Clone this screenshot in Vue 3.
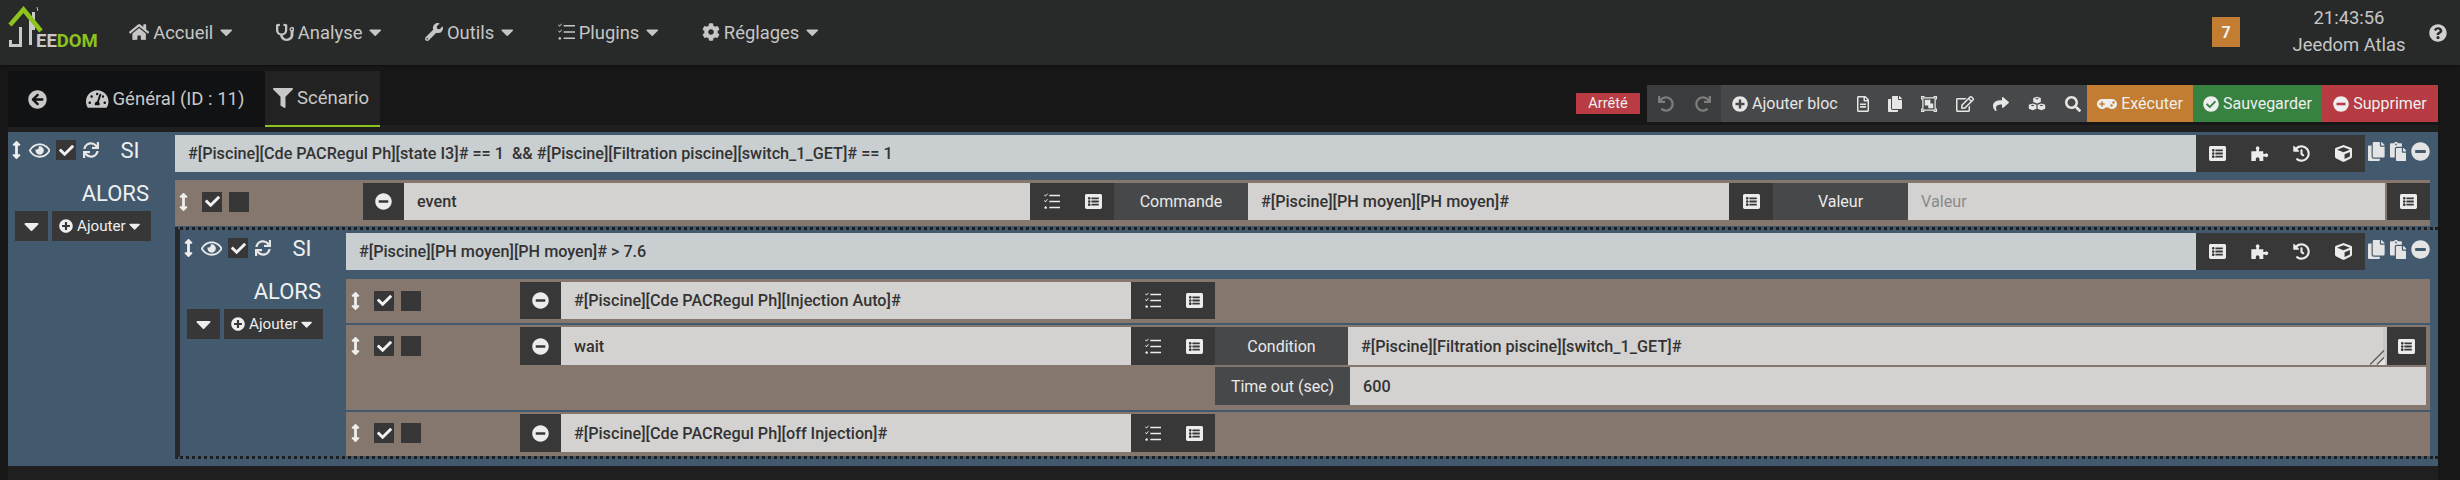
<script setup>
import { h } from 'vue'

const P = {
  check: [512, 'M173.898 439.404l-166.4-166.4c-9.997-9.997-9.997-26.206 0-36.204l36.203-36.204c9.997-9.998 26.207-9.998 36.204 0L192 312.69 432.095 72.596c9.997-9.997 26.207-9.997 36.204 0l36.203 36.204c9.997 9.997 9.997 26.206 0 36.204l-294.4 294.401c-9.998 9.997-26.207 9.997-36.204-.001z'],
  minus: [512, 'M256 8C119 8 8 119 8 256s111 248 248 248 248-111 248-248S393 8 256 8zM124 296c-6.6 0-12-5.4-12-12v-56c0-6.6 5.4-12 12-12h264c6.6 0 12 5.4 12 12v56c0 6.6-5.4 12-12 12H124z'],
  plus: [512, 'M256 8C119 8 8 119 8 256s111 248 248 248 248-111 248-248S393 8 256 8zm144 276c0 6.6-5.4 12-12 12h-92v92c0 6.6-5.4 12-12 12h-56c-6.6 0-12-5.4-12-12v-92h-92c-6.6 0-12-5.4-12-12v-56c0-6.6 5.4-12 12-12h92v-92c0-6.6 5.4-12 12-12h56c6.6 0 12 5.4 12 12v92h92c6.6 0 12 5.4 12 12v56z'],
  ok: [512, 'M504 256c0 136.967-111.033 248-248 248S8 392.967 8 256 119.033 8 256 8s248 111.033 248 248zM227.314 387.314l184-184c6.248-6.248 6.248-16.379 0-22.627l-22.627-22.627c-6.248-6.249-16.379-6.249-22.628 0L216 308.118l-70.059-70.059c-6.248-6.248-16.379-6.248-22.628 0l-22.627 22.627c-6.248 6.248-6.248 16.379 0 22.627l104 104c6.249 6.249 16.379 6.249 22.628.001z'],
  help: [512, 'M504 256c0 136.997-111.043 248-248 248S8 392.997 8 256C8 119.083 119.043 8 256 8s248 111.083 248 248zM262.655 90c-54.497 0-89.255 22.957-116.549 63.758-3.536 5.286-2.353 12.415 2.715 16.258l34.699 26.31c5.205 3.947 12.621 3.008 16.665-2.122 17.864-22.658 30.113-35.797 57.303-35.797 20.429 0 45.698 13.148 45.698 32.958 0 14.976-12.363 22.667-32.534 33.976C247.128 238.528 216 254.941 216 296v4c0 6.627 5.373 12 12 12h56c6.627 0 12-5.373 12-12v-1.333c0-28.462 83.186-29.647 83.186-106.667 0-58.002-60.165-102-116.531-102zM256 338c-25.365 0-46 20.635-46 46 0 25.364 20.635 46 46 46s46-20.636 46-46c0-25.365-20.635-46-46-46z'],
  back: [512, 'M256 504C119 504 8 393 8 256S119 8 256 8s248 111 248 248-111 248-248 248zm28.9-143.6L209.4 288H392c13.3 0 24-10.7 24-24v-16c0-13.3-10.7-24-24-24H209.4l75.5-72.4c9.7-9.3 9.9-24.8.4-34.3l-11-10.9c-9.4-9.4-24.6-9.4-33.9 0L107.7 239c-9.4 9.4-9.4 24.6 0 33.9l132.7 132.7c9.4 9.4 24.6 9.4 33.9 0l11-10.9c9.5-9.5 9.3-25-.4-34.3z'],
  search: [512, 'M505 442.7L405.3 343c-4.5-4.5-10.6-7-17-7H372c27.6-35.3 44-79.7 44-128C416 93.1 322.9 0 208 0S0 93.1 0 208s93.1 208 208 208c48.3 0 92.7-16.4 128-44v16.3c0 6.4 2.5 12.5 7 17l99.7 99.7c9.4 9.4 24.6 9.4 33.9 0l28.3-28.3c9.4-9.4 9.4-24.6.1-34zM208 336c-70.7 0-128-57.2-128-128 0-70.7 57.2-128 128-128 70.7 0 128 57.2 128 128 0 70.7-57.2 128-128 128z'],
  filter: [512, 'M487.976 0H24.028C2.71 0-8.047 25.866 7.058 40.971L192 225.941V432c0 7.831 3.821 15.17 10.237 19.662l80 55.98C298.02 518.69 320 507.493 320 487.98V225.941l184.947-184.97C520.021 25.896 509.338 0 487.976 0z'],
  share: [512, 'M503.691 189.836L327.687 37.851C312.281 24.546 288 35.347 288 56.015v80.053C127.371 137.907 0 170.1 0 322.326c0 61.441 39.581 122.309 83.333 154.132 13.653 9.931 33.111-2.533 28.077-18.631C66.066 312.814 132.917 274.316 288 272.085V360c0 20.7 24.3 31.453 39.687 18.164l176.004-152c11.071-9.562 11.086-26.753 0-36.328z'],
  wrench: [512, 'M507.73 109.1c-2.24-9.03-13.54-12.09-20.12-5.51l-74.36 74.36-67.88-11.31-11.31-67.88 74.36-74.36c6.62-6.62 3.43-17.9-5.66-20.16-47.38-11.74-99.55.91-136.58 37.93-39.64 39.64-50.55 97.1-34.05 147.2L18.74 402.76c-24.99 24.99-24.99 65.51 0 90.5 24.99 24.99 65.51 24.99 90.5 0l213.21-213.21c50.12 16.71 107.47 5.68 147.37-34.22 37.07-37.07 49.7-89.32 37.91-136.73zM64 472c-13.25 0-24-10.75-24-24 0-13.26 10.75-24 24-24s24 10.74 24 24c0 13.25-10.75 24-24 24z'],
  cog: [512, 'M487.4 315.7l-42.6-24.6c4.3-23.2 4.3-47 0-70.2l42.6-24.6c4.9-2.8 7.1-8.6 5.5-14-11.1-35.6-30-67.8-54.7-94.6-3.8-4.1-10-5.1-14.8-2.3L380.8 110c-17.9-15.4-38.5-27.3-60.8-35.1V25.8c0-5.6-3.9-10.5-9.4-11.7-36.7-8.2-74.3-7.8-109.2 0-5.5 1.2-9.4 6.1-9.4 11.7V75c-22.2 7.9-42.8 19.8-60.8 35.1L88.7 85.5c-4.9-2.8-11-1.9-14.8 2.3-24.7 26.7-43.6 58.9-54.7 94.6-1.7 5.4.6 11.2 5.5 14L67.3 221c-4.3 23.2-4.3 47 0 70.2l-42.6 24.6c-4.9 2.8-7.1 8.6-5.5 14 11.1 35.6 30 67.8 54.7 94.6 3.8 4.1 10 5.1 14.8 2.3l42.6-24.6c17.9 15.4 38.5 27.3 60.8 35.1v49.2c0 5.6 3.9 10.5 9.4 11.7 36.7 8.2 74.3 7.8 109.2 0 5.5-1.2 9.4-6.1 9.4-11.7v-49.2c22.2-7.9 42.8-19.8 60.8-35.1l42.6 24.6c4.9 2.8 11 1.9 14.8-2.3 24.7-26.7 43.6-58.9 54.7-94.6 1.5-5.5-.7-11.3-5.6-14.1zM256 336c-44.1 0-80-35.9-80-80s35.9-80 80-80 80 35.9 80 80-35.9 80-80 80z'],
  home: [576, 'M280.37 148.26L96 300.11V464a16 16 0 0 0 16 16l112.06-.29a16 16 0 0 0 15.92-16V368a16 16 0 0 1 16-16h64a16 16 0 0 1 16 16v95.64a16 16 0 0 0 16 16.05L464 480a16 16 0 0 0 16-16V300L295.67 148.26a12.19 12.19 0 0 0-15.3 0zM571.6 251.47L488 182.56V44.05a12 12 0 0 0-12-12h-56a12 12 0 0 0-12 12v72.61L318.47 43a48 48 0 0 0-61 0L4.34 251.47a12 12 0 0 0-1.6 16.9l25.5 31A12 12 0 0 0 45.15 301l235.22-193.74a12.19 12.19 0 0 1 15.3 0L530.9 301a12 12 0 0 0 16.9-1.6l25.5-31a12 12 0 0 0-1.7-16.93z'],
  sync: [512, 'M440.65 12.57l4 82.77A247.16 247.16 0 0 0 255.83 8C134.73 8 33.91 94.92 12.29 209.82A12 12 0 0 0 24.09 224h49.05a12 12 0 0 0 11.67-9.26 175.91 175.91 0 0 1 317-56.94l-101.46-4.86a12 12 0 0 0-12.57 12v47.41a12 12 0 0 0 12 12H500a12 12 0 0 0 12-12V12a12 12 0 0 0-12-12h-47.37a12 12 0 0 0-11.98 12.57zM255.83 432a175.61 175.61 0 0 1-146-77.8l101.8 4.87a12 12 0 0 0 12.57-12v-47.4a12 12 0 0 0-12-12H12a12 12 0 0 0-12 12V500a12 12 0 0 0 12 12h47.35a12 12 0 0 0 12-12.6l-4.15-82.57A247.17 247.17 0 0 0 255.83 504c121.11 0 221.93-86.92 243.55-201.82a12 12 0 0 0-11.8-14.18h-49.05a12 12 0 0 0-11.67 9.26A175.86 175.86 0 0 1 255.83 432z'],
  undo: [512, 'M212.333 224.333H12c-6.627 0-12-5.373-12-12V12C0 5.373 5.373 0 12 0h48c6.627 0 12 5.373 12 12v78.112C117.773 39.279 184.26 7.47 258.175 8.007c136.906.994 246.448 111.623 246.157 248.532C504.041 393.258 393.12 504 256.333 504c-64.089 0-122.496-24.313-166.51-64.215-5.099-4.622-5.334-12.554-.467-17.42l33.967-33.967c4.474-4.474 11.662-4.717 16.401-.525C170.76 415.336 211.58 432 256.333 432c97.268 0 176-78.716 176-176 0-97.267-78.716-176-176-176-58.496 0-110.28 28.476-142.274 72.333h98.274c6.627 0 12 5.373 12 12v48c0 6.627-5.373 12-12 12z'],
  copy: [448, 'M320 448v40c0 13.255-10.745 24-24 24H24c-13.255 0-24-10.745-24-24V120c0-13.255 10.745-24 24-24h72v296c0 30.879 25.121 56 56 56h168zm0-344V0H152c-13.255 0-24 10.745-24 24v368c0 13.255 10.745 24 24 24h272c13.255 0 24-10.745 24-24V128H344c-13.2 0-24-10.8-24-24zm120.971-31.029L375.029 7.029A24 24 0 0 0 358.059 0H352v96h96v-6.059a24 24 0 0 0-7.029-16.97z'],
  paste: [448, 'M128 184c0-30.879 25.122-56 56-56h136V56c0-13.255-10.745-24-24-24h-80.61C204.306 12.89 183.637 0 160 0s-44.306 12.89-55.39 32H24C10.745 32 0 42.745 0 56v336c0 13.255 10.745 24 24 24h104V184zm32-144c13.255 0 24 10.745 24 24s-10.745 24-24 24-24-10.745-24-24 10.745-24 24-24zm184 248h104v200c0 13.255-10.745 24-24 24H184c-13.255 0-24-10.745-24-24V184c0-13.255 10.745-24 24-24h136v104c0 13.2 10.8 24 24 24zm104-38.059V256h-96v-96h6.059a24 24 0 0 1 16.97 7.029l65.941 65.941a24.002 24.002 0 0 1 7.03 16.971z'],
  eye: [576, 'M288 144a110.94 110.94 0 0 0-31.24 5 55.4 55.4 0 0 1 7.24 27 56 56 0 0 1-56 56 55.4 55.4 0 0 1-27-7.24A111.71 111.71 0 1 0 288 144zm284.52 97.4C518.29 135.59 410.93 64 288 64S57.68 135.64 3.48 241.41a32.35 32.35 0 0 0 0 29.19C57.71 376.41 165.07 448 288 448s230.32-71.64 284.52-177.41a32.35 32.35 0 0 0 0-29.19zM288 400c-98.65 0-189.09-55-237.93-144C98.91 167 189.34 112 288 112s189.09 55 237.93 144C477.1 345 386.66 400 288 400z'],
  list: [512, 'M464 480H48c-26.51 0-48-21.49-48-48V80c0-26.51 21.49-48 48-48h416c26.51 0 48 21.49 48 48v352c0 26.51-21.49 48-48 48zM128 120c-22.091 0-40 17.909-40 40s17.909 40 40 40 40-17.909 40-40-17.909-40-40-40zm0 96c-22.091 0-40 17.909-40 40s17.909 40 40 40 40-17.909 40-40-17.909-40-40-40zm0 96c-22.091 0-40 17.909-40 40s17.909 40 40 40 40-17.909 40-40-17.909-40-40-40zm288-136v-32c0-6.627-5.373-12-12-12H204c-6.627 0-12 5.373-12 12v32c0 6.627 5.373 12 12 12h200c6.627 0 12-5.373 12-12zm0 96v-32c0-6.627-5.373-12-12-12H204c-6.627 0-12 5.373-12 12v32c0 6.627 5.373 12 12 12h200c6.627 0 12-5.373 12-12zm0 96v-32c0-6.627-5.373-12-12-12H204c-6.627 0-12 5.373-12 12v32c0 6.627 5.373 12 12 12h200c6.627 0 12-5.373 12-12z'],
  tasks: [512, 'M30 60l14-14 30 28L130 14l15 14-70 78zM30 230l14-14 30 28 56-60 15 14-70 78zM80 400a38 38 0 1 0 .1 0zM190 55h322v46H190zM190 233h322v46H190zM190 411h322v46H190z'],
  steth: [512, 'M447.1 112c-34.2.5-62.3 28.4-63 62.6-.5 24.3 12.5 45.6 32 56.8V344c0 57.3-50.2 104-112 104-60 0-109.2-44-111.9-98.9C268.6 336.9 320 277.3 320 205.8V59.2c0-11.4-8-21.2-19.2-23.5l-62.9-12.6c-13-2.6-25.6 5.8-28.2 18.8l-3.1 15.7c-2.6 13 5.8 25.6 18.8 28.2l30.7 6.1v112.4c0 52.9-42.8 96.2-95.6 96.1-52.7 0-95.5-43.1-95.5-96V93.1l30.6-6.1c13-2.6 21.4-15.2 18.8-28.2l-3.1-15.7c-2.6-13-15.2-21.4-28.2-18.8L19.2 36.9C8 39.1 0 49 0 60.4v146.4c0 71.6 51.6 131.2 119.5 143.4C122.2 439.1 200.4 512 304 512c105.9 0 192-78.9 192-168V231.4c19.1-11.1 32-31.7 32-55.4 0-35.7-29.2-64.5-64.9-64zM448 200a24 24 0 1 1 .1 0z'],
  tacho: [576, 'M288 32C128.94 32 0 160.94 0 320c0 52.8 14.25 102.26 39.06 144.8 5.61 9.62 16.3 15.2 27.44 15.2h443c11.14 0 21.83-5.58 27.44-15.2C561.75 422.26 576 372.8 576 320c0-159.06-128.94-288-288-288zm0 64c14.71 0 26.58 10.13 30.32 23.65-1.11 2.26-2.64 4.23-3.45 6.67l-9.22 27.67c-5.13 3.49-10.97 6.01-17.64 6.01-17.67 0-32-14.33-32-32S270.33 96 288 96zM96 384c-17.67 0-32-14.33-32-32s14.33-32 32-32 32 14.33 32 32-14.33 32-32 32zm48-160c-17.67 0-32-14.33-32-32s14.33-32 32-32 32 14.33 32 32-14.33 32-32 32zm246.77-72.41l-61.33 184C343.13 347.33 352 364.54 352 384c0 11.72-3.38 22.55-8.88 32H232.88c-5.5-9.45-8.88-20.28-8.88-32 0-33.94 26.5-61.43 59.9-63.59l61.34-184.01c4.17-12.56 17.73-19.45 30.36-15.17 12.57 4.19 19.35 17.79 15.17 30.36zm14.66 57.2l15.52-46.55c3.47-1.29 7.13-2.23 11.05-2.23 17.67 0 32 14.33 32 32s-14.33 32-32 32c-11.38 0-20.89-6.28-26.57-15.22zM480 384c-17.67 0-32-14.33-32-32s14.33-32 32-32 32 14.33 32 32-14.33 32-32 32z'],
  gamepad: [640, 'M480.07 96H160a160 160 0 1 0 114.24 272h91.52A160 160 0 1 0 480.07 96zM248 268a12 12 0 0 1-12 12h-52v52a12 12 0 0 1-12 12h-24a12 12 0 0 1-12-12v-52H84a12 12 0 0 1-12-12v-24a12 12 0 0 1 12-12h52v-52a12 12 0 0 1 12-12h24a12 12 0 0 1 12 12v52h52a12 12 0 0 1 12 12zm216 76a40 40 0 1 1 40-40 40 40 0 0 1-40 40zm64-96a40 40 0 1 1 40-40 40 40 0 0 1-40 40z'],
  puzzle: [576, 'M40 190H190V135A55 55 0 1 1 270 135V190H400V270H455A55 55 0 1 1 455 350H400V480H285V425A55 55 0 0 0 175 425V480H40Z'],
  history: [512, 'M504 255.531c.253 136.64-111.18 248.372-247.82 248.468-59.015.042-113.223-20.53-155.822-54.911-11.077-8.94-11.905-25.541-1.839-35.607l11.267-11.267c8.609-8.609 22.353-9.551 31.891-1.984C173.062 425.135 212.781 440 256 440c101.705 0 184-82.311 184-184 0-101.705-82.311-184-184-184-48.814 0-93.149 18.969-126.068 49.932l50.754 50.754c10.08 10.08 2.941 27.314-11.313 27.314H24c-8.837 0-16-7.163-16-16V38.627c0-14.254 17.234-21.393 27.314-11.314l49.372 49.372C129.209 34.136 189.552 8 256 8c136.81 0 247.747 110.78 248 247.531zm-180.912 78.784l9.823-12.63c8.138-10.463 6.253-25.542-4.21-33.679L288 256.349V152c0-13.255-10.745-24-24-24h-16c-13.255 0-24 10.745-24 24v135.651l65.409 50.874c10.463 8.137 25.541 6.253 33.679-4.21z'],
  cube: [512, 'M239.1 6.3l-208 78c-18.7 7-31.1 25-31.1 45v225.1c0 18.2 10.3 34.8 26.5 42.9l208 104c13.5 6.8 29.4 6.8 42.9 0l208-104c16.3-8.1 26.5-24.8 26.5-42.9V129.3c0-20-12.4-37.9-31.1-44.9l-208-78C262 2.2 250 2.2 239.1 6.3zM256 68.4l192 72v1.1l-192 78-192-78v-1.1l192-72zm32 356V275.5l160-65v133.9l-160 80z'],
  cubes: [576, 'M288 20L410 66V190L288 238 166 190V66ZM288 60L222 84 288 110 354 84ZM148 236L270 282V406L148 454 26 406V282ZM148 276L82 300 148 326 214 300ZM428 236L550 282V406L428 454 306 406V282ZM428 276L362 300 428 326 494 300Z'],
  crop: [512, 'M0 0H110V40H402V0H512V110H472V402H512V512H402V472H110V512H0V402H40V110H0ZM40 40V70H70V40ZM442 40V70H472V40ZM40 442V472H70V442ZM442 442V472H472V442ZM80 80V432H432V80ZM120 120H300V240H392V392H232V300H120Z'],
  file: [384, 'M288 248v28c0 6.6-5.4 12-12 12H108c-6.6 0-12-5.4-12-12v-28c0-6.6 5.4-12 12-12h168c6.6 0 12 5.4 12 12zm-12 72H108c-6.6 0-12 5.4-12 12v28c0 6.6 5.4 12 12 12h168c6.6 0 12-5.4 12-12v-28c0-6.6-5.4-12-12-12zm108-188.1V464c0 26.5-21.5 48-48 48H48c-26.5 0-48-21.5-48-48V48C0 21.5 21.5 0 48 0h204.1C264.8 0 277 5.1 286 14.1L369.9 98c9 8.9 14.1 21.2 14.1 33.9zm-128-80V128h76.1L256 51.9zM336 464V176H232c-13.3 0-24-10.7-24-24V48H48v416h288z'],
  edit: [576, 'M402.3 344.9l32-32c5-5 13.7-1.5 13.7 5.7V464c0 26.5-21.5 48-48 48H48c-26.5 0-48-21.5-48-48V112c0-26.5 21.5-48 48-48h273.5c7.1 0 10.7 8.6 5.7 13.7l-32 32c-1.5 1.5-3.5 2.3-5.7 2.3H48v352h352V350.5c0-2.1.8-4.1 2.3-5.6zm156.6-201.8L296.3 405.7l-90.4 10c-26.2 2.9-48.5-19.2-45.6-45.6l10-90.4L432.9 17.1c22.9-22.9 59.9-22.9 82.7 0l43.2 43.2c22.9 22.9 22.9 60 .1 82.8zM460.1 174L402 115.9 216.2 301.8l-7.3 65.3 65.3-7.3L460.1 174zm64.8-79.7l-43.2-43.2c-4.1-4.1-10.8-4.1-14.8 0L436 82l58.1 58.1 30.9-30.9c4-4.2 4-10.8-.1-14.9z'],
  arrows: [256, 'M214.059 377.941H168V134.059h46.059c21.382 0 32.09-25.851 16.971-40.971L144.971 7.029c-9.373-9.373-24.568-9.373-33.941 0L24.971 93.088c-15.119 15.119-4.411 40.971 16.971 40.971H88v243.882H41.941c-21.382 0-32.09 25.851-16.971 40.971l86.059 86.059c9.373 9.373 24.568 9.373 33.941 0l86.059-86.059c15.119-15.119 4.411-40.971-16.971-40.971z'],
  caret: [320, 'M31 192h258c18 0 27 21 14 34L174 355c-8 8-20 8-28 0L17 226c-13-13-4-34 14-34z']
}

// Fixed icon height comes from CSS; the width follows each glyph's own ratio.
const Ic = (props) => {
  const [w, d] = P[props.n]
  return h('svg', { viewBox: `0 0 ${w} 512`, fill: 'currentColor', 'fill-rule': 'evenodd', class: 'ic' }, [h('path', { d })])
}
Ic.props = ['n']

const navItems = [
  { icon: 'home', label: 'Accueil' },
  { icon: 'steth', label: 'Analyse' },
  { icon: 'wrench', label: 'Outils' },
  { icon: 'tasks', label: 'Plugins' },
  { icon: 'cog', label: 'Réglages' }
]
const toolIcons = ['file', 'copy', 'crop', 'edit', 'share', 'cubes', 'search']
const addonIcons = ['list', 'puzzle', 'history', 'cube']
</script>

<template>
  <div class="page">
    <header class="nav">
      <svg class="logo" viewBox="0 0 110 65" width="110" height="65">
        <path d="M29 18h3v27h-3z" fill="#c9c9c9" />
        <path d="M37 7l.8 4" stroke="#bbb" stroke-width="1" fill="none" />
        <path d="M32 12h3v18h-3z" fill="#c9c9c9" />
        <path d="M19 27h3v20H9v-7h3v4h7z" fill="#c9c9c9" />
        <path d="M10 25L23.500 9.500L41 31" fill="none" stroke="#8dc21f" stroke-width="4.500" />
        <text x="36" y="47" class="logo-text">EE<tspan fill="#8dc21f">DOM</tspan></text>
      </svg>
      <div class="menu">
        <div v-for="m in navItems" :key="m.label" class="menu-item">
          <Ic :n="m.icon" class="menu-ic" />
          <span>{{ m.label }}</span>
          <Ic n="caret" class="menu-caret" />
        </div>
      </div>
      <div class="nav-right">
        <div class="badge">7</div>
        <div class="clock">
          <div>21:43:56</div>
          <div>Jeedom Atlas</div>
        </div>
        <Ic n="help" class="help" />
      </div>
    </header>

    <div class="subbar">
      <div class="tabs">
        <div class="tab tab-back"><Ic n="back" class="tab-ic" /></div>
        <div class="tab tab-gen"><Ic n="tacho" class="tab-ic" /><span>Général (ID : 11)</span></div>
        <div class="tab tab-active"><Ic n="filter" class="tab-ic" /><span>Scénario</span></div>
      </div>
      <div class="toolbar">
        <span class="state">Arrêté</span>
        <div class="tool-group undo">
          <Ic n="undo" class="tool-ic" />
          <Ic n="undo" class="tool-ic flip" />
        </div>
        <div class="tool-group main">
          <div class="add-bloc"><Ic n="plus" class="tool-ic" /><span>Ajouter bloc</span></div>
          <div v-for="t in toolIcons" :key="t" class="tool-btn"><Ic :n="t" class="tool-ic" /></div>
        </div>
        <div class="act orange"><Ic n="gamepad" class="tool-ic" /><span>Exécuter</span></div>
        <div class="act green"><Ic n="ok" class="tool-ic" /><span>Sauvegarder</span></div>
        <div class="act red"><Ic n="minus" class="tool-ic" /><span>Supprimer</span></div>
      </div>
    </div>

    <main class="content">
      <section class="block">
        <div class="side">
          <div class="head">
            <Ic n="arrows" class="arrows" />
            <Ic n="eye" class="eye" />
            <span class="box"><Ic n="check" class="tick" /></span>
            <Ic n="sync" class="sync" />
            <span class="si">SI</span>
          </div>
          <div class="alors">ALORS</div>
          <div class="side-btns">
            <div class="sbtn sbtn-down"><Ic n="caret" class="down" /></div>
            <div class="sbtn sbtn-add"><Ic n="plus" class="add-ic" /><span>Ajouter</span><Ic n="caret" class="add-caret" /></div>
          </div>
        </div>
        <div class="body">
          <div class="cond">
            <div class="cond-input">#[Piscine][Cde PACRegul Ph][state I3]# == 1&nbsp; &amp;&amp; #[Piscine][Filtration piscine][switch_1_GET]# == 1</div>
            <div class="addon"><div v-for="a in addonIcons" :key="a" class="ibtn"><Ic :n="a" class="ib-ic" /></div></div>
            <div class="mini"><Ic n="copy" class="mini-ic" /><Ic n="paste" class="mini-ic" /><Ic n="minus" class="mini-ic" /></div>
          </div>

          <div class="action action-first">
            <div class="line">
              <div class="row-left wide">
                <Ic n="arrows" class="arrows" />
                <span class="box"><Ic n="check" class="tick" /></span>
                <span class="box"></span>
              </div>
              <div class="ibtn rm"><Ic n="minus" class="ib-ic" /></div>
              <div class="field name-wide">event</div>
              <div class="grp"><div class="ibtn"><Ic n="tasks" class="ib-ic" /></div><div class="ibtn"><Ic n="list" class="ib-ic" /></div></div>
              <div class="lab w-cmd">Commande</div>
              <div class="field w-cmdv">#[Piscine][PH moyen][PH moyen]#</div>
              <div class="ibtn wide-btn"><Ic n="list" class="ib-ic" /></div>
              <div class="lab w-val">Valeur</div>
              <div class="field flex ph">Valeur</div>
              <div class="ibtn end-btn"><Ic n="list" class="ib-ic" /></div>
            </div>
          </div>

          <section class="block nested">
            <div class="side">
              <div class="head">
                <Ic n="arrows" class="arrows" />
                <Ic n="eye" class="eye" />
                <span class="box"><Ic n="check" class="tick" /></span>
                <Ic n="sync" class="sync" />
                <span class="si">SI</span>
              </div>
              <div class="alors">ALORS</div>
              <div class="side-btns">
                <div class="sbtn sbtn-down"><Ic n="caret" class="down" /></div>
                <div class="sbtn sbtn-add"><Ic n="plus" class="add-ic" /><span>Ajouter</span><Ic n="caret" class="add-caret" /></div>
              </div>
            </div>
            <div class="body">
              <div class="cond">
                <div class="cond-input">#[Piscine][PH moyen][PH moyen]# &gt; 7.6</div>
                <div class="addon"><div v-for="a in addonIcons" :key="a" class="ibtn"><Ic :n="a" class="ib-ic" /></div></div>
                <div class="mini"><Ic n="copy" class="mini-ic" /><Ic n="paste" class="mini-ic" /><Ic n="minus" class="mini-ic" /></div>
              </div>

              <div class="action a1">
                <div class="line">
                  <div class="row-left">
                    <Ic n="arrows" class="arrows" />
                    <span class="box"><Ic n="check" class="tick" /></span>
                    <span class="box"></span>
                  </div>
                  <div class="ibtn rm"><Ic n="minus" class="ib-ic" /></div>
                  <div class="field name">#[Piscine][Cde PACRegul Ph][Injection Auto]#</div>
                  <div class="grp"><div class="ibtn"><Ic n="tasks" class="ib-ic" /></div><div class="ibtn"><Ic n="list" class="ib-ic" /></div></div>
                </div>
              </div>

              <div class="action a2">
                <div class="line tall">
                  <div class="row-left">
                    <Ic n="arrows" class="arrows" />
                    <span class="box"><Ic n="check" class="tick" /></span>
                    <span class="box"></span>
                  </div>
                  <div class="ibtn rm"><Ic n="minus" class="ib-ic" /></div>
                  <div class="field name">wait</div>
                  <div class="grp"><div class="ibtn"><Ic n="tasks" class="ib-ic" /></div><div class="ibtn"><Ic n="list" class="ib-ic" /></div></div>
                  <div class="lab w-cond">Condition</div>
                  <div class="field flex grip">
                    <span>#[Piscine][Filtration piscine][switch_1_GET]#</span>
                    <svg class="grip-mark" viewBox="0 0 15 15" width="15" height="15">
                      <path d="M7 15l8-8v8z" fill="#e6e5e3" />
                      <path d="M0 14.500L14 .5M7 14.500L14 7.500" stroke="#555" stroke-width="1.200" fill="none" />
                    </svg>
                  </div>
                  <div class="ibtn end-small"><Ic n="list" class="ib-ic" /></div>
                </div>
                <div class="line second">
                  <div class="lab w-time">Time out (sec)</div>
                  <div class="field flex">600</div>
                </div>
              </div>

              <div class="action a3">
                <div class="line">
                  <div class="row-left">
                    <Ic n="arrows" class="arrows" />
                    <span class="box"><Ic n="check" class="tick" /></span>
                    <span class="box"></span>
                  </div>
                  <div class="ibtn rm"><Ic n="minus" class="ib-ic" /></div>
                  <div class="field name">#[Piscine][Cde PACRegul Ph][off Injection]#</div>
                  <div class="grp"><div class="ibtn"><Ic n="tasks" class="ib-ic" /></div><div class="ibtn"><Ic n="list" class="ib-ic" /></div></div>
                </div>
              </div>
            </div>
          </section>
        </div>
      </section>
    </main>
  </div>
</template>

<style>
html, body { margin: 0; background: #171717; }
</style>

<style scoped>
.page {
  width: 2460px;
  height: 480px;
  overflow: hidden;
  display: flex;
  flex-direction: column;
  background: #171717;
  font-family: Roboto, "Liberation Sans", sans-serif;
  box-sizing: border-box;
}
.ic { display: block; height: 16px; flex: none; }

/* top navigation */
.nav {
  height: 65px;
  flex: none;
  display: flex;
  align-items: center;
  background: #282a29;
  color: #c6c6c6;
  font-size: 18.400px;
  box-shadow: 0 1px 2px rgba(0, 0, 0, .4);
  position: relative;
  z-index: 1;
}
.logo { flex: none; align-self: flex-start; width: 110px; }
.logo-text { font: 700 18.500px Roboto, "Liberation Sans", sans-serif; fill: #c9c9c9; }
.menu { display: flex; gap: 43px; margin-left: 19px; margin-top: -1px; }
.menu-item { display: flex; align-items: center; }
.menu-ic { height: 18px; margin-right: 4px; }
.menu-caret { height: 20px; margin-left: 7px; }
.nav-right { margin-left: auto; display: flex; align-items: center; padding-right: 13px; }
.badge {
  width: 28px; height: 30px; margin-top: -1px;
  background: #c27d32; color: #f0f0f0;
  display: flex; align-items: center; justify-content: center;
  font-size: 16px; font-weight: 700;
}
.clock { width: 160px; margin: -3px 0 0 29px; text-align: center; line-height: 27px; font-size: 18.400px; }
.help { height: 18px; color: #d0d0d0; }

/* tabs and toolbar */
.subbar { height: 60px; flex: none; display: flex; padding: 0 22px 0 8px; }
.tabs {
  display: flex; height: 56px; margin-top: 6px; position: relative; z-index: 1;
  background: #111214; color: #c8c8c8; font-size: 18.500px;
  flex: none;
}
.tab { display: flex; align-items: center; box-sizing: border-box; }
.tab-back { width: 69px; padding-left: 20px; }
.tab-back .tab-ic { height: 19px; }
.tab-gen { width: 188px; padding-left: 9px; }
.tab-gen .tab-ic { height: 20px; margin-right: 4px; }
.tab-active { width: 115px; padding-left: 8px; background: #222; border-bottom: 2px solid #8dc21f; }
.tab-active .tab-ic { height: 20px; margin-right: 4px; }

.toolbar { margin-left: auto; margin-top: 20px; height: 37px; display: flex; align-items: stretch; font-size: 16px; color: #e6e6e6; }
.state {
  align-self: center; width: 64px; height: 21px; line-height: 21px; text-align: center; margin-right: 7px;
  background: #b93c44; color: #eee; font-size: 14.500px;
}
.tool-group { display: flex; align-items: center; flex: none; }
.tool-ic { height: 16px; }
.undo { background: #3b3c3d; width: 74px; box-sizing: border-box; padding-left: 11px; gap: 21px; color: #7d7d7d; }
.flip { transform: scaleX(-1); }
.main { background: #47484a; width: 366px; box-sizing: border-box; padding-left: 11px; }
.add-bloc { display: flex; align-items: center; gap: 4px; margin-right: 9.500px; white-space: nowrap; flex: none; }
.tool-btn { padding: 0 9.500px; flex: none; }
.act { display: flex; align-items: center; justify-content: center; gap: 4px; color: #eee; box-sizing: border-box; flex: none; }
.orange { background: #c27d32; width: 106px; }
.green { background: #378240; width: 129px; }
.red { background: #b63b43; width: 116px; }

/* scenario */
.content { margin: 0 22px 0 8px; padding-top: 7px; flex: 1; background: #1f1f1f; }
.block { display: grid; grid-template-columns: 167px 1fr; background: #435a6e; padding-bottom: 7px; }
.block.nested {
  grid-template-columns: 166px 1fr;
  margin-top: 1px;
  padding-bottom: 0;
  border-top: 3px dotted #1c1f22;
  border-bottom: 3px dotted #1c1f22;
  border-left: 5px solid #26282a;
}
.side { color: #eef0f1; }
.head { margin-top: 8px; height: 20px; display: flex; align-items: center; padding-left: 4px; }
.arrows { height: 18px; color: #eee; flex: none; }
.head .eye { height: 19px; margin-left: 8px; color: #eaeaea; }
.box {
  width: 20px; height: 20px; flex: none; background: #373737; color: #f2f2f2;
  display: flex; align-items: center; justify-content: center;
}
.tick { height: 15px; }
.head .box { margin-left: 6px; }
.head .sync { margin-left: 7px; height: 16px; color: #e6e6e6; }
.si { margin: 2px 0 0 21px; font-size: 22px; line-height: 20px; }
.alors { margin-top: 20px; height: 28px; line-height: 28px; width: 141px; text-align: right; font-size: 22px; }
.side-btns { display: flex; margin-top: 3px; margin-left: 7px; gap: 4px; }
.sbtn { height: 30px; background: #373737; color: #eee; display: flex; align-items: center; box-sizing: border-box; font-size: 15.200px; }
.sbtn-down { width: 33px; justify-content: center; }
.down { height: 24px; }
.sbtn-add { width: 99px; padding-left: 7px; }
.add-ic { height: 14px; margin-right: 4px; }
.add-caret { height: 18px; margin-left: 3px; }

.body { display: flex; flex-direction: column; min-width: 0; }
.cond { display: flex; margin-top: 3px; height: 37px; }
.cond-input {
  flex: 1; background: #c9ced1; color: #333; font-size: 16.200px; font-weight: 500;
  line-height: 37px; padding-left: 13px; white-space: pre;
}
.addon { display: flex; width: 169px; background: #383838; flex: none; }
.ibtn { display: flex; align-items: center; justify-content: center; width: 42px; flex: none; background: #383838; color: #ececec; }
.ib-ic { height: 17px; }
.addon .ibtn { width: 42.250px; }
.mini { width: 73px; flex: none; display: flex; align-items: flex-start; padding: 7px 0 0 3px; gap: 5px; box-sizing: border-box; color: #e4e4e4; }
.mini-ic { height: 19px; }

.action { background: #85776e; margin-right: 8px; box-sizing: border-box; }
.action-first { margin-top: 8px; height: 46px; padding-top: 3px; }
.a1 { margin-top: 9px; height: 44px; padding-top: 3px; }
.a2 { margin-top: 2px; height: 85px; padding-top: 2px; }
.a3 { margin-top: 2px; height: 44px; padding-top: 2px; }
.line { display: flex; height: 37px; }
.line.tall { height: 38px; }
.a3 .line { height: 38px; }
.line.second { height: 38px; margin: 2px 4px 0 869px; }
.row-left { width: 174px; flex: none; display: flex; align-items: center; padding-left: 5px; box-sizing: border-box; gap: 14px; }
.row-left.wide { width: 188px; padding-left: 4px; }
.row-left .arrows { width: 9px; }
.row-left .box + .box { margin-left: -7px; }
.rm { width: 41px; }
.field {
  background: #d3d2d0; color: #333; font-size: 16.200px; font-weight: 500;
  display: flex; align-items: center; padding-left: 13px; box-sizing: border-box;
}
.flex { flex: 1; min-width: 0; }
.name-wide { width: 626px; flex: none; }
.name { width: 570px; flex: none; }
.grp { display: flex; width: 84px; flex: none; }
.lab { background: #47484a; color: #eaeaea; font-size: 16px; display: flex; align-items: center; justify-content: center; flex: none; }
.w-cmd { width: 134px; }
.w-cmdv { width: 481px; flex: none; }
.wide-btn { width: 44px; }
.w-val { width: 135px; }
.ph { color: #8a8a8a; font-weight: 400; margin-right: 2px; }
.end-btn { width: 43px; }
.end-small { width: 39px; margin-right: 4px; }
.w-cond { width: 133px; }
.w-time { width: 135px; }
.grip { position: relative; border-right: 4px solid #c9c8c6; }
.grip-mark { position: absolute; right: -2px; bottom: 0; }
</style>
